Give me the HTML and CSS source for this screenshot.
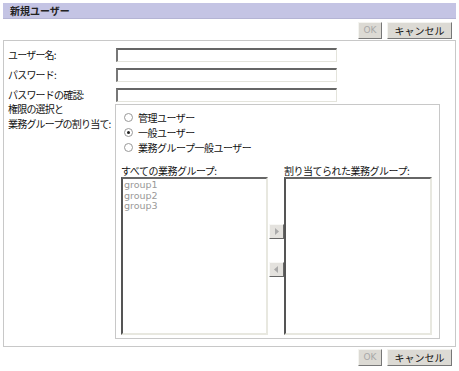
FILE: index.html
```html
<!DOCTYPE html>
<html lang="ja">
    <head>
        <meta charset="UTF-8" />
        <meta name="viewport" content="width=device-width, initial-scale=1.0" />
        <title>新規ユーザー</title>
        <link rel="stylesheet" href="styles.css">
    </head>
    <body>
        <div class="page">
            <div class="title">新規ユーザー</div>

            <div class="actions">
                <button class="btn ok" disabled>OK</button>
                <button class="btn cancel">キャンセル</button>
            </div>

            <div class="panel">
                <div class="row">
                    <label class="label">ユーザー名:</label>
                    <input type="text" class="field" />
                </div>
                <div class="row">
                    <label class="label">パスワード:</label>
                    <input type="password" class="field" />
                </div>
                <div class="row">
                    <label class="label">パスワードの確認:</label>
                    <input type="password" class="field" />
                </div>
                <div class="row role_row">
                    <div class="label role_label">
                        <span>権限の選択と</span>
                        <span>業務グループの割り当て:</span>
                    </div>
                    <div class="role_box">
                        <div class="radios">
                            <div class="radio"><span class="dot"></span>管理ユーザー</div>
                            <div class="radio"><span class="dot checked"></span>一般ユーザー</div>
                            <div class="radio"><span class="dot"></span>業務グループ一般ユーザー</div>
                        </div>
                        <div class="groups">
                            <div class="group_col">
                                <div class="group_title">すべての業務グループ:</div>
                                <div class="listbox">
                                    <div class="item">group1</div>
                                    <div class="item">group2</div>
                                    <div class="item">group3</div>
                                </div>
                            </div>
                            <div class="arrows">
                                <button class="arrow">
                                    <svg viewBox="0 0 7 9"><path d="M2 1 L6 4.5 L2 8 Z" /></svg>
                                </button>
                                <button class="arrow">
                                    <svg viewBox="0 0 7 9"><path d="M5 1 L1 4.5 L5 8 Z" /></svg>
                                </button>
                            </div>
                            <div class="group_col">
                                <div class="group_title">割り当てられた業務グループ:</div>
                                <div class="listbox right"></div>
                            </div>
                        </div>
                    </div>
                </div>
            </div>

            <div class="actions bottom">
                <button class="btn ok" disabled>OK</button>
                <button class="btn cancel">キャンセル</button>
            </div>
        </div>
    </body>
</html>
```

FILE: styles.css
```css
* {
    margin: 0;
    padding: 0;
    box-sizing: border-box;
}
body {
    background: #fff;
    font-family: 'Noto Sans CJK JP', 'DejaVu Sans', sans-serif;
    font-size: 10px;
    color: #111;
}
.page {
    width: 459px;
    padding: 3px 3px 0;
}
.title {
    height: 16px;
    line-height: 16px;
    padding-left: 7px;
    background: #c4c4e4;
    border-bottom: 1px solid #b4b4d4;
    font-weight: bold;
    color: #222;
}
.actions {
    display: flex;
    justify-content: flex-end;
    gap: 5px;
    margin-top: 3px;
    padding-right: 4px;
}
.actions.bottom {
    margin-top: 2px;
}
.btn {
    flex-shrink: 0;
    height: 17px;
    font-family: 'Noto Sans CJK JP', 'DejaVu Sans', sans-serif;
    font-size: 10px;
    line-height: 13px;
    background: #dcdad4;
    border: 1px solid;
    border-color: #f4f4f0 #777 #777 #f4f4f0;
    color: #111;
}
.btn.ok {
    width: 24px;
    color: #a8a8a8;
    font-family: 'DejaVu Sans', sans-serif;
    font-size: 9px;
}
.btn.cancel {
    width: 65px;
}
.panel {
    margin-top: 1px;
    height: 307px;
    border: 1px solid #c8c8c8;
    padding: 7px 0 0 4px;
    display: flex;
    flex-direction: column;
    gap: 6px;
}
.row {
    display: flex;
    align-items: center;
}
.label {
    width: 108px;
    flex-shrink: 0;
    line-height: 12px;
    white-space: nowrap;
    letter-spacing: -0.8px;
}
.field {
    width: 221px;
    height: 14px;
    border: 1px solid;
    border-width: 2px 1px 1px 2px;
    border-color: #666 #e4e4dc #e4e4dc #777;
    background: #fff;
}
.role_row {
    align-items: flex-start;
    margin-top: -4px;
}
.role_label {
    display: flex;
    flex-direction: column;
    margin-top: -3px;
}
.role_label span {
    height: 15px;
    line-height: 15px;
}
.role_box {
    margin-left: -1px;
    width: 325px;
    height: 235px;
    border: 1px solid #c8c8c8;
    padding: 5px 5px 0;
}
.radios {
    padding-left: 3px;
}
.radio {
    height: 15px;
    display: flex;
    align-items: center;
    gap: 5px;
    letter-spacing: -0.5px;
}
.dot {
    width: 9px;
    height: 9px;
    border-radius: 50%;
    border: 1px solid #999;
    background: #fff;
    display: flex;
    align-items: center;
    justify-content: center;
}
.dot.checked::after {
    content: '';
    width: 3px;
    height: 3px;
    border-radius: 50%;
    background: #222;
}
.groups {
    display: flex;
    margin-top: 10px;
}
.group_title {
    height: 12px;
    line-height: 12px;
    white-space: nowrap;
    letter-spacing: -0.5px;
}
.listbox {
    width: 147px;
    height: 158px;
    border: 1px solid;
    border-width: 2px;
    border-color: #666 #e8e8e0 #e8e8e0 #555;
    padding: 1px 1px;
    font-family: 'DejaVu Sans', sans-serif;
    font-size: 9.5px;
    line-height: 10.5px;
    color: #999;
}
.listbox.right {
    width: 148px;
}
.arrows {
    width: 16px;
    display: flex;
    flex-direction: column;
    padding-top: 59px;
    padding-left: 1px;
    gap: 23px;
}
.arrow {
    width: 15px;
    height: 15px;
    background: #e4e2de;
    border: 1px solid;
    border-color: #f8f8f6 #666 #666 #f8f8f6;
    display: flex;
    align-items: center;
    justify-content: center;
}
.arrow svg {
    width: 7px;
    height: 9px;
    fill: #aaa;
}
```
